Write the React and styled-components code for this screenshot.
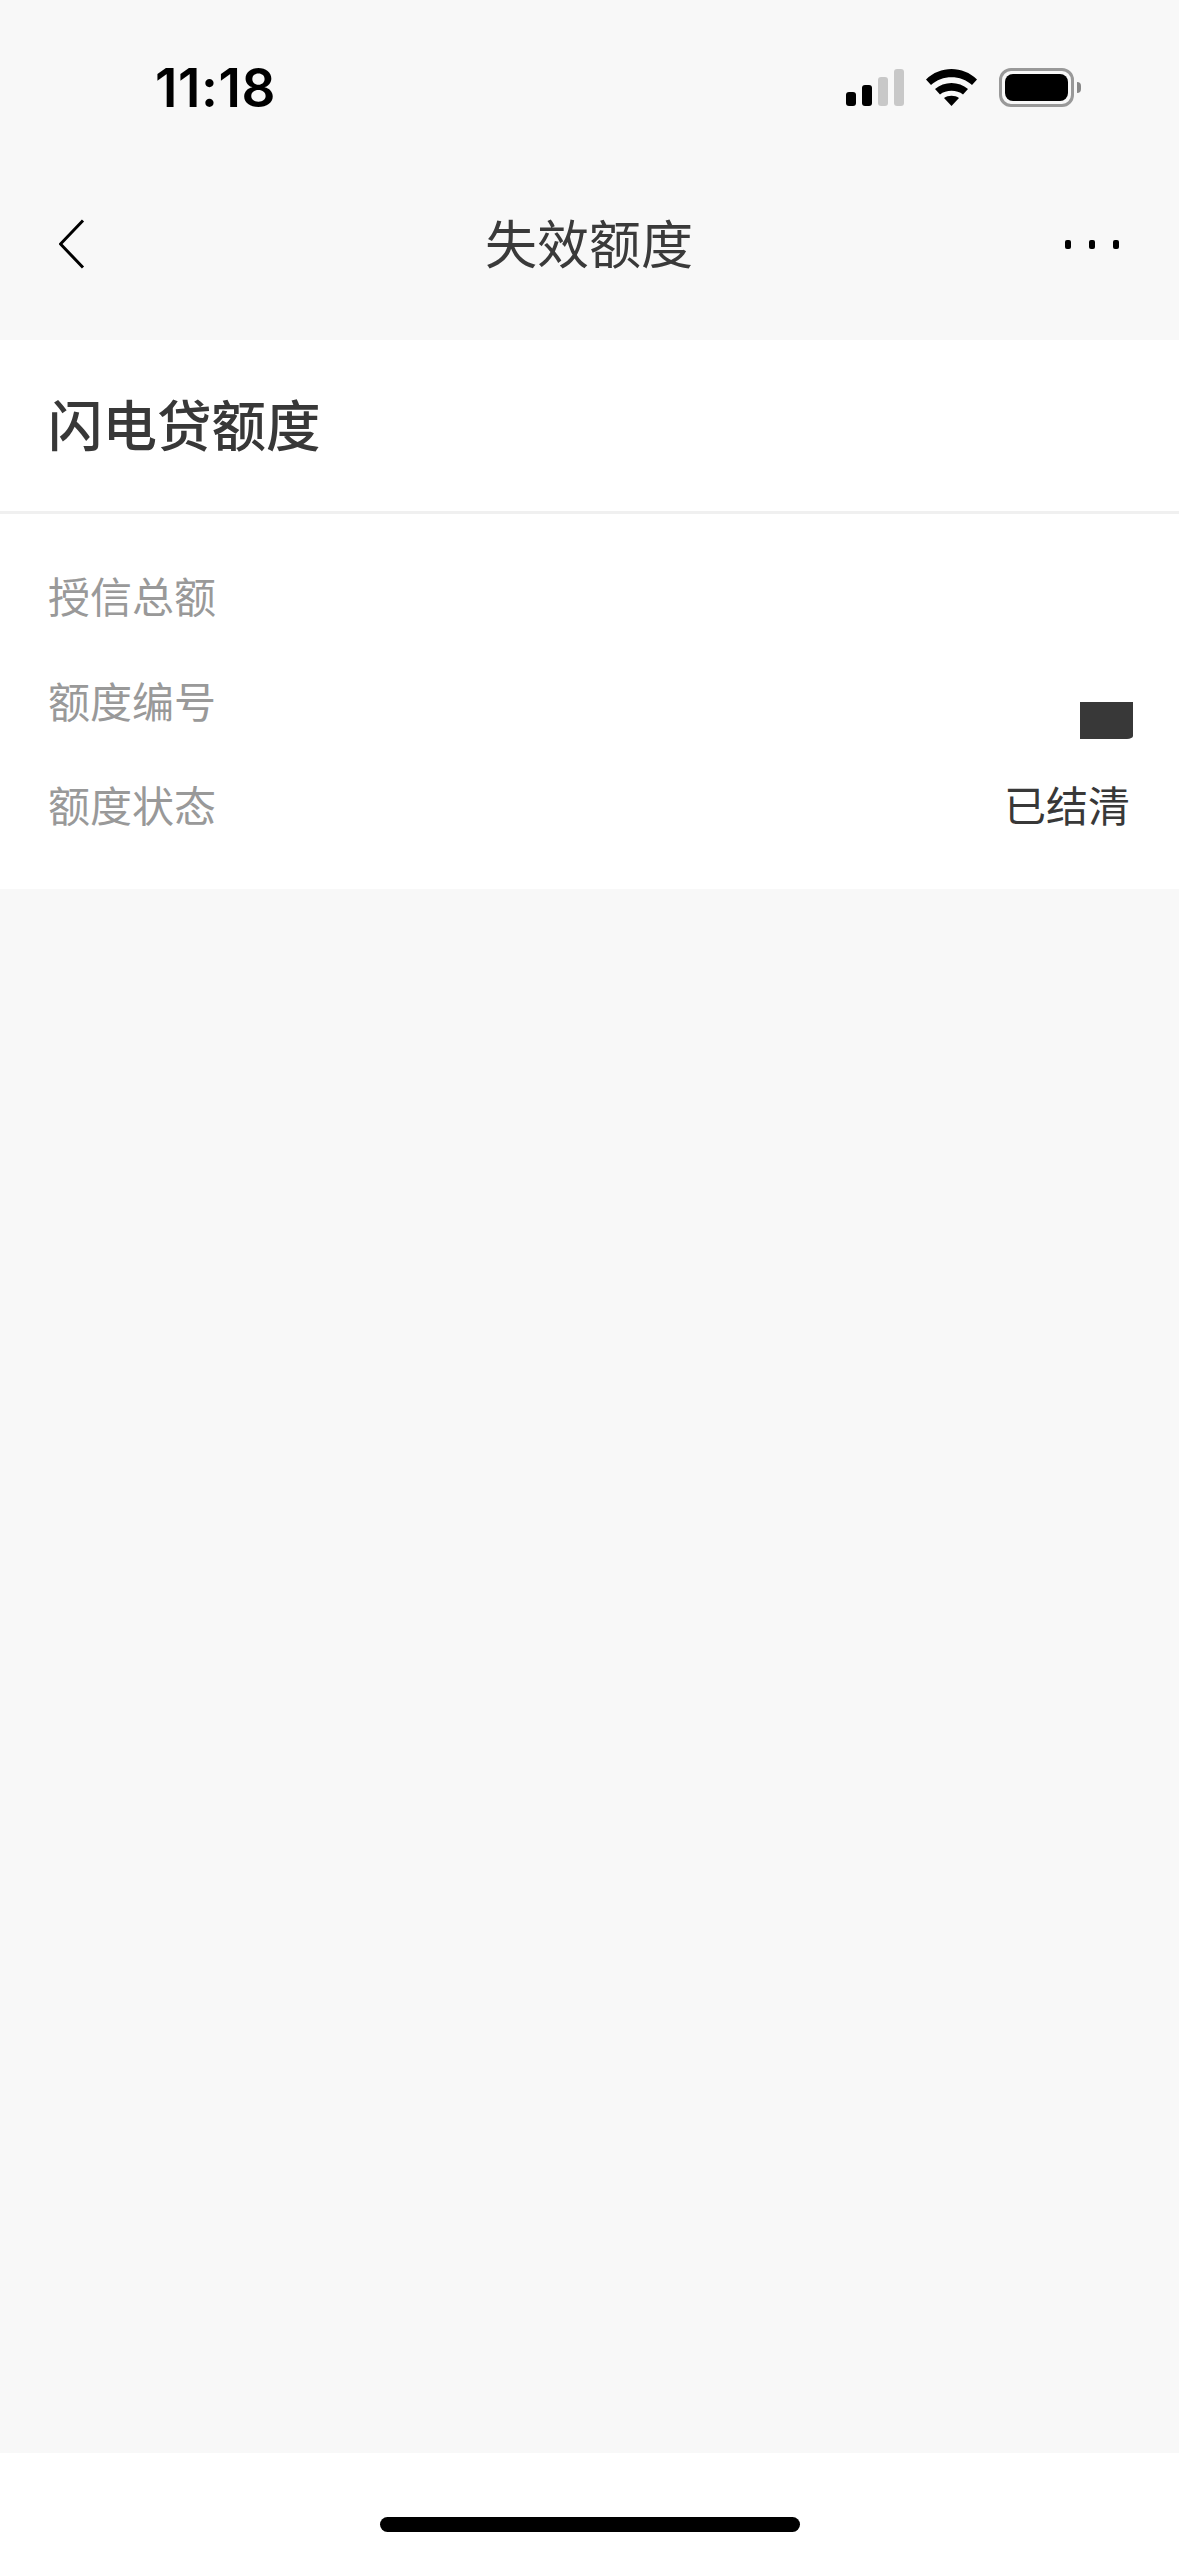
import React from "react";
import styled, { createGlobalStyle } from "styled-components";

const GlobalStyle = createGlobalStyle`
  html, body {
    margin: 0;
    padding: 0;
    background-color: #f8f8f8;
  }
  * {
    box-sizing: border-box;
  }
`;

const Page = styled.div`
  width: 1179px;
  height: 2556px;
  display: flex;
  flex-direction: column;
  background-color: #f8f8f8;
  font-family: "Noto Sans CJK SC", "Liberation Sans", sans-serif;
  overflow: hidden;
`;

const StatusBar = styled.div`
  height: 148px;
  flex-shrink: 0;
  padding: 68px 105px 0 155px;
  display: flex;
  justify-content: space-between;
  align-items: flex-start;
`;

const Time = styled.span`
  font-family: Inter, "Liberation Sans", sans-serif;
  font-size: 53px;
  font-weight: 600;
  line-height: 40px;
  letter-spacing: 0.6px;
  color: #000;
`;

const StatusIcons = styled.div`
  display: flex;
  align-items: flex-start;
`;

const Signal = styled.svg`
  display: block;
  width: 58px;
  height: 38px;
  margin: 1px 22px 0 0;
`;

const Wifi = styled.svg`
  display: block;
  width: 51px;
  height: 37px;
  margin: 1px 22px 0 0;
`;

const Battery = styled.div`
  position: relative;
  width: 75px;
  height: 39px;
  padding: 3px;
  border: 3px solid #999;
  border-radius: 12px;
  &::after {
    content: "";
    position: absolute;
    left: 75px;
    top: 11px;
    width: 4px;
    height: 11px;
    background-color: #888;
    border-radius: 0 4px 4px 0;
  }
`;

const BatteryFill = styled.div`
  height: 100%;
  background-color: #000;
  border-radius: 8px;
`;

const NavBar = styled.div`
  height: 192px;
  flex-shrink: 0;
  padding: 0 60px 0 59px;
  display: grid;
  grid-template-columns: 1fr auto 1fr;
  align-items: center;
`;

const BackIcon = styled.svg`
  display: block;
  width: 26px;
  height: 50px;
`;

const NavTitle = styled.h1`
  margin: 0 0 5px;
  font-size: 52px;
  font-weight: 400;
  line-height: 70px;
  color: #3a3a3a;
`;

const MoreButton = styled.div`
  justify-self: end;
  display: flex;
  gap: 18px;
`;

const Dot = styled.span`
  width: 6px;
  height: 9px;
  border-radius: 2px;
  background-color: #000;
`;

const Card = styled.section`
  flex-shrink: 0;
  background-color: #fff;
`;

const CardHead = styled.div`
  height: 174px;
  padding: 0 48px 3px;
  display: flex;
  align-items: center;
  border-bottom: 3px solid #f0f0f0;
`;

const CardTitle = styled.h2`
  margin: 0 0 2px;
  font-size: 54.5px;
  font-weight: 500;
  line-height: 70px;
  color: #383838;
`;

const InfoList = styled.div`
  padding: 29px 0 33px;
`;

const InfoRow = styled.div`
  height: 104.4px;
  padding: 0 46px 0 48px;
  display: flex;
  justify-content: space-between;
  align-items: center;
`;

const Label = styled.span`
  font-size: 42px;
  line-height: 60px;
  color: #999;
`;

const Value = styled.span`
  margin-right: 3px;
  font-size: 42px;
  line-height: 60px;
  color: #383838;
`;

const Redacted = styled.div`
  width: 53px;
  height: 37px;
  margin-top: 41px;
  background-color: #383838;
  border-bottom-right-radius: 6px 3px;
`;

const Spacer = styled.div`
  flex: 1;
`;

const Footer = styled.div`
  height: 103px;
  flex-shrink: 0;
  padding-top: 64px;
  background-color: #fff;
  display: flex;
  justify-content: center;
`;

const HomeBar = styled.div`
  width: 420px;
  height: 15px;
  border-radius: 8px;
  background-color: #000;
`;

const rows = [
  { label: "授信总额" },
  { label: "额度编号", redacted: true },
  { label: "额度状态", value: "已结清" },
];

const App = () => {
  return (
    <Page>
      <GlobalStyle />
      <StatusBar>
        <Time>11:18</Time>
        <StatusIcons>
          <Signal viewBox="0 0 58 38">
            <rect x="0" y="23" width="10" height="14" rx="3" fill="#000" />
            <rect x="16" y="16" width="10" height="21" rx="3" fill="#000" />
            <rect x="32" y="8" width="10" height="29" rx="3" fill="#c8c8c8" />
            <rect x="48" y="0" width="10" height="37" rx="3" fill="#c8c8c8" />
          </Signal>
          <Wifi viewBox="0 0 51 37">
            <path d="M0 10.5C14 -3.5 37 -3.5 51 10.5L46 16C35 5.5 16 5.5 5 16Z" fill="#000" />
            <path d="M9 20C18 12 33 12 42 20L37 25.5C31 20.5 20 20.5 14 25.5Z" fill="#000" />
            <path d="M18 29C22 26 29 26 33 29L25.5 37Z" fill="#000" />
          </Wifi>
          <Battery>
            <BatteryFill />
          </Battery>
        </StatusIcons>
      </StatusBar>
      <NavBar>
        <BackIcon viewBox="0 0 26 50">
          <path d="M24 1.5L1.5 25L24 48.5" fill="none" stroke="#000" strokeWidth="3" />
        </BackIcon>
        <NavTitle>失效额度</NavTitle>
        <MoreButton>
          <Dot />
          <Dot />
          <Dot />
        </MoreButton>
      </NavBar>
      <Card>
        <CardHead>
          <CardTitle>闪电贷额度</CardTitle>
        </CardHead>
        <InfoList>
          {rows.map((row) => (
            <InfoRow key={row.label}>
              <Label>{row.label}</Label>
              {row.value && <Value>{row.value}</Value>}
              {row.redacted && <Redacted />}
            </InfoRow>
          ))}
        </InfoList>
      </Card>
      <Spacer />
      <Footer>
        <HomeBar />
      </Footer>
    </Page>
  );
};

export default App;
